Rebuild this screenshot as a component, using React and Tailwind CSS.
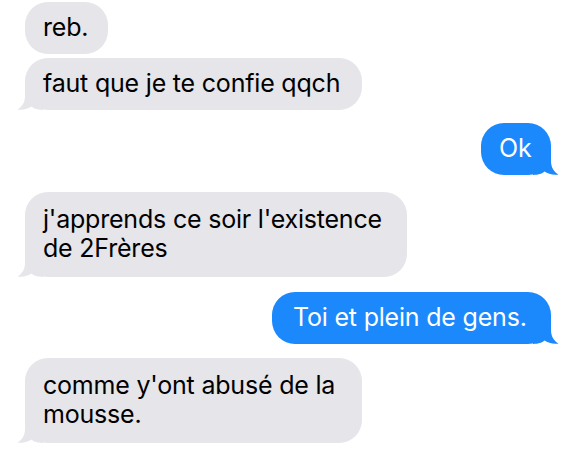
import React from "react";

const GRAY = "#e5e5ea";
const BLUE = "#1b88fc";

function Tail({ side, color }) {
  const isLeft = side === "left";
  return (
    <svg
      width="26"
      height="24"
      viewBox="0 0 26 24"
      className={
        "absolute bottom-0 " +
        (isLeft ? "left-[-8px]" : "right-[-8px] scale-x-[-1]")
      }
      aria-hidden="true"
    >
      <path
        d="M8 0 L8 10 C8 16.5 5 21 0.5 23.6 C6 24.4 11 23 14.5 20.6 C17 22.6 20 24 26 24 L26 0 Z"
        fill={color}
      />
    </svg>
  );
}

function Bubble({ side, tail, multi, width, className = "", children }) {
  const isLeft = side === "left";
  const color = isLeft ? GRAY : BLUE;
  return (
    <div className={"flex " + (isLeft ? "justify-start" : "justify-end") + " " + className}>
      <div
        className={
          "relative rounded-[23px] pl-[18px] pr-[16px] text-[25px] leading-[29px] tracking-[-0.2px] whitespace-nowrap " +
          (multi ? "pt-[13px] pb-[14px] " : "pt-[11px] pb-[12px] ") +
          (isLeft ? "bg-[#e5e5ea] text-black" : "bg-[#1b88fc] text-white")
        }
        style={{ width }}
      >
        {tail && <Tail side={side} color={color} />}
        <span className="relative">{children}</span>
      </div>
    </div>
  );
}

export default function App() {
  return (
    <div
      className="w-[567px] h-[457px] bg-white overflow-hidden flex flex-col pt-[2px] pl-[25px] pr-[16px]"
      style={{ fontFamily: "Inter, 'Liberation Sans', sans-serif" }}
    >
      <Bubble side="left" width={83}>reb.</Bubble>
      <Bubble side="left" tail width={337} className="mt-[4px]">
        faut que je te confie qqch
      </Bubble>
      <Bubble side="right" tail width={70} className="mt-[13px]">
        Ok
      </Bubble>
      <Bubble side="left" tail multi width={382} className="mt-[17px]">
        j'apprends ce soir l'existence
        <br />
        de 2Frères
      </Bubble>
      <Bubble side="right" tail width={279} className="mt-[15px]">
        <span className="pl-[3px]">Toi et plein de gens.</span>
      </Bubble>
      <Bubble side="left" tail multi width={337} className="mt-[14px]">
        comme y'ont abusé de la
        <br />
        mousse.
      </Bubble>
    </div>
  );
}
